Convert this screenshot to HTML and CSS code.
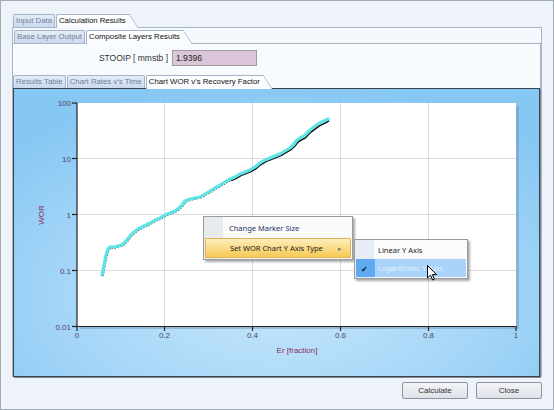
FILE: index.html
```html
<!DOCTYPE html>
<html>
<head>
<meta charset="utf-8">
<link rel="stylesheet" href="styles.css">
</head>
<body>
<div class="win">
  <div class="tabs">
    <div class="tab">Input Data</div>
    <div class="tab sel">Calculation Results</div>
  </div>
  <div class="panel1">
    <div class="tabs">
      <div class="tab">Base Layer Output</div>
      <div class="tab sel">Composite Layers Results</div>
    </div>
    <div class="panel2">
      <div class="field">
        <span class="field-label">STOOIP [ mmstb ]</span>
        <div class="field-input">1.9396</div>
      </div>
      <div class="tabs tabs3">
        <div class="tab">Results Table</div>
        <div class="tab">Chart Rates v's Time</div>
        <div class="tab sel">Chart WOR v's Recovery Factor</div>
      </div>
      <div class="chart">
        <svg class="chart-svg" width="525" height="287" viewBox="0 0 525 287">
          <rect x="66" y="17" width="439" height="223" fill="#6f8fae" opacity="0.45"/>
          <rect x="63" y="14" width="439" height="223" fill="#ffffff"/>
          <g stroke="#dcdcdc" stroke-width="1">
            <line x1="150.5" y1="14" x2="150.5" y2="237"/>
            <line x1="238.5" y1="14" x2="238.5" y2="237"/>
            <line x1="326.5" y1="14" x2="326.5" y2="237"/>
            <line x1="414.5" y1="14" x2="414.5" y2="237"/>
            <line x1="63" y1="69.5" x2="502" y2="69.5"/>
            <line x1="63" y1="125.5" x2="502" y2="125.5"/>
            <line x1="63" y1="181.5" x2="502" y2="181.5"/>
          </g>
          <g stroke="#222" stroke-width="1.2">
            <line x1="63" y1="14" x2="63" y2="237.5"/>
            <line x1="62.5" y1="237.5" x2="502" y2="237.5"/>
            <line x1="58" y1="14" x2="63" y2="14"/>
            <line x1="58" y1="69.5" x2="63" y2="69.5"/>
            <line x1="58" y1="125.5" x2="63" y2="125.5"/>
            <line x1="58" y1="181.5" x2="63" y2="181.5"/>
            <line x1="58" y1="237.5" x2="63" y2="237.5"/>
            <line x1="63" y1="237" x2="63" y2="242"/>
            <line x1="150.5" y1="237" x2="150.5" y2="242"/>
            <line x1="238.5" y1="237" x2="238.5" y2="242"/>
            <line x1="326.5" y1="237" x2="326.5" y2="242"/>
            <line x1="414.5" y1="237" x2="414.5" y2="242"/>
            <line x1="502" y1="237" x2="502" y2="242"/>
          </g>
          <g class="tick-label" text-anchor="end">
            <text x="57" y="17">100</text>
            <text x="57" y="72.5">10</text>
            <text x="57" y="128.5">1</text>
            <text x="57" y="184.5">0.1</text>
            <text x="57" y="240.5">0.01</text>
          </g>
          <g class="tick-label" text-anchor="middle">
            <text x="63" y="248.5">0</text>
            <text x="150.5" y="248.5">0.2</text>
            <text x="238.5" y="248.5">0.4</text>
            <text x="326.5" y="248.5">0.6</text>
            <text x="414.5" y="248.5">0.8</text>
            <text x="502" y="248.5">1</text>
          </g>
          <text class="axis-title" x="0" y="0" text-anchor="middle" transform="translate(30 126) rotate(-90)">WOR</text>
          <text class="axis-title" x="283" y="264" text-anchor="middle">Er [fraction]</text>
          <polyline fill="none" stroke="#2a2a2a" stroke-width="1.3" stroke-dasharray="1.5 1.5" points="89,187 91,177 93,167 95,161 97,159 101,159 105,158 109,157 111,155 114,152 117,148 121,144 125,141 129,139 133,137 137,135 142,132 147,130 152,127 157,125 162,123 166,120 169,117 172,113 177,111 182,110 187,109 192,106 197,103 202,100 207,97 212,94 217,91"/>
          <polyline fill="none" stroke="#111" stroke-width="1.6" points="217,91.5 222,89.5 227,86.5 232,84.5 237,82.5 242,79.5 247,75.5 252,72.5 257,70.5 262,68.5 267,66.5 272,63.5 277,60.5 281,57 284,53 287,51 291,49 294,46 297,43 301,40 305,37 309,35 313,33 315,31.5"/>
          <polyline fill="none" stroke="#5fe3e6" stroke-width="3.2" stroke-linejoin="round" stroke-linecap="round" points="88,186 90,176 92,166 94,160 96,158 100,158 104,157 108,156 110,154 113,151 116,147 120,143 124,140 128,138 132,136 136,134 141,131 146,129 151,126 156,124 161,122 165,119 168,116 171,112 176,110 181,109 186,108 191,105 196,102 201,99 206,96 211,93 216,90 221,88 226,85 231,83 236,81 241,78 246,74 251,71 256,69 261,67 266,65 271,62 276,59 280,55 283,51 286,49 290,47 293,44 296,41 300,38 304,35 308,33 312,31 314,30"/>
        </svg>
        <div class="menu">
          <div class="menu-item"><span class="menu-icon"></span><span class="menu-text blue">Change Marker Size</span></div>
          <div class="menu-item hot"><span class="menu-icon"></span><span class="menu-text">Set WOR Chart Y Axis Type</span><span class="menu-arrow">&#9656;</span></div>
        </div>
        <div class="submenu">
          <div class="menu-item sub"><span class="menu-icon"></span><span class="menu-text">Linear Y Axis</span></div>
          <div class="menu-item sub sel"><span class="menu-icon check">&#10004;</span><span class="menu-text">Logarithmic Y Axis</span></div>
        </div>
        <svg class="cursor" width="11" height="17" viewBox="0 0 11 17">
          <path d="M0.5 0.5 L0.5 13 L3.5 10.2 L5.6 15 L7.4 14.2 L5.4 9.6 L9.5 9.6 Z" fill="#ffffff" stroke="#000" stroke-width="1" stroke-linejoin="round"/>
        </svg>
      </div>
    </div>
  </div>
  <div class="footer">
    <div class="btn">Calculate</div>
    <div class="btn">Close</div>
  </div>
</div>
</body>
</html>
```
FILE: styles.css
```css
html, body {
  margin: 0;
  padding: 0;
}
body {
  width: 554px;
  height: 410px;
  overflow: hidden;
  font-family: "Liberation Sans", Arial, sans-serif;
}
.win {
  box-sizing: border-box;
  width: 554px;
  height: 410px;
  border: 1px solid #a3abb7;
  background: #eef3fa;
  padding: 13px 11px 0 11px;
}
.tabs {
  display: flex;
  align-items: flex-end;
  height: 13px;
  padding-left: 1px;
}
.tab {
  box-sizing: border-box;
  height: 13px;
  border: 1px solid #a2b3ca;
  border-bottom: none;
  border-radius: 2px 2px 0 0;
  background: linear-gradient(#e4ecf7, #cad9ed);
  color: #6f809a;
  font-size: 7.8px;
  line-height: 12px;
  padding: 0 2px;
  margin-right: 1px;
  white-space: nowrap;
}
.tab.sel {
  position: relative;
  z-index: 2;
  height: 14px;
  margin-bottom: -1px;
  border-right: none;
  border-radius: 2px 0 0 0;
  background: linear-gradient(#ffffff, #f8fbff);
  color: #111;
  margin-right: 9px;
  padding-right: 3px;
}
.tab.sel::after {
  content: "";
  position: absolute;
  top: -1px;
  right: -9px;
  width: 9px;
  height: 14px;
  background: linear-gradient(to top right, #f9fbff calc(50% - 0.6px), #a2b3ca 50%, rgba(0,0,0,0) calc(50% + 0.7px));
}
.panel1 {
  border: 1px solid #a8b5c6;
  border-bottom: none;
  background: #f5f8fd;
  padding-top: 2px;
}
.panel2 {
  border-top: 1px solid #a8b5c6;
  border-right: 1px solid #a8b5c6;
  background: #f8fbfe;
}
.field {
  display: flex;
  align-items: center;
  gap: 4px;
  padding-top: 6px;
  height: 16px;
}
.field-label {
  width: 155px;
  text-align: right;
  font-size: 8.5px;
  color: #333;
}
.field-input {
  box-sizing: border-box;
  width: 85px;
  height: 16px;
  border: 1px solid #a09aa2;
  background: #dbc5d9;
  font-size: 8.5px;
  line-height: 14px;
  padding-left: 3px;
  color: #222;
}
.tabs3 {
  margin-top: 9px;
  padding-left: 0;
}
.chart {
  position: relative;
  box-sizing: border-box;
  height: 289px;
  border: 1px solid #3a424e;
  box-shadow: 1px 1px 0 #7d8894;
  background: radial-gradient(ellipse 70% 75% at 50% 72%, #c6e6fb 0%, #a6d7f8 55%, #86c7f3 100%);
}
.chart-svg {
  display: block;
}
.tick-label {
  font-family: "Liberation Sans", Arial, sans-serif;
  font-size: 8px;
  fill: #51475f;
}
.axis-title {
  font-family: "Liberation Sans", Arial, sans-serif;
  font-size: 8px;
  fill: #8a2f5f;
}
.menu {
  position: absolute;
  left: 189px;
  top: 127px;
  width: 150px;
  box-sizing: border-box;
  border: 1px solid #9b9b9b;
  background: linear-gradient(to right, #e8ebee 0, #e8ebee 19px, #fafafa 19px);
  box-shadow: 2px 2px 2px rgba(60, 70, 80, 0.45);
  padding: 1px 1px;
}
.menu-item {
  display: flex;
  align-items: center;
  height: 20px;
  font-family: "Noto Sans", "Liberation Sans", sans-serif;
  font-size: 7.5px;
  color: #222;
  box-sizing: border-box;
}
.menu-icon {
  width: 24px;
  flex: none;
}
.menu-text {
  flex: 1;
  white-space: nowrap;
}
.blue {
  color: #1f3866;
}
.menu-item.hot {
  border: 1px solid #e2b354;
  background: linear-gradient(#fdeebb, #f8c954);
  border-radius: 1px;
}
.menu-arrow {
  width: 12px;
  color: #777;
  font-size: 7px;
}
.submenu {
  position: absolute;
  left: 340px;
  top: 150px;
  width: 114px;
  box-sizing: border-box;
  border: 1px solid #9b9b9b;
  background: linear-gradient(to right, #e6edf6 0, #e6edf6 19px, #fbfbfb 19px);
  box-shadow: 2px 2px 2px rgba(60, 70, 80, 0.45);
  padding: 1px;
}
.menu-item.sub {
  height: 18px;
}
.menu-item.sub .menu-icon {
  width: 22px;
}
.menu-item.sub.sel {
  background: linear-gradient(to right, #5ea9f0 0, #5ea9f0 19px, #a9d3f9 19px);
  color: #e4f0fc;
}
.menu-item.sub .check {
  color: #111;
  font-size: 8px;
  text-align: center;
  width: 16px;
  margin-right: 6px;
}
.cursor {
  position: absolute;
  left: 413px;
  top: 176px;
}
.footer {
  display: flex;
  justify-content: flex-end;
  gap: 8px;
  margin-top: 5px;
}
.btn {
  box-sizing: border-box;
  width: 66px;
  height: 17px;
  border: 1px solid #8c939e;
  border-radius: 2px;
  background: linear-gradient(#f4f5f7, #dde1e7);
  font-size: 8px;
  line-height: 15px;
  text-align: center;
  color: #333;
}
```
